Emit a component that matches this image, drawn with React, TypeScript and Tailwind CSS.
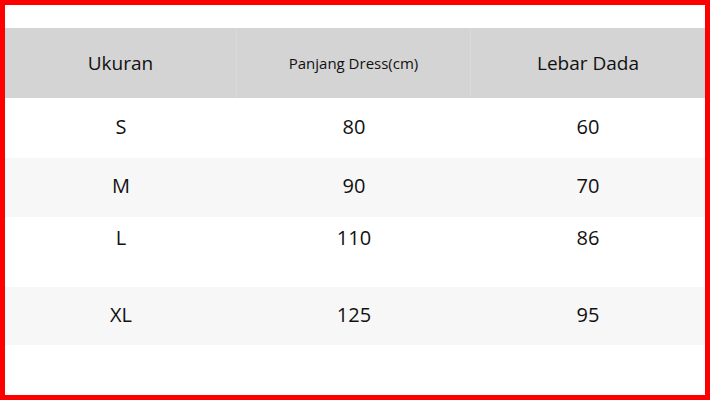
import React from 'react';

const rows = [
  { size: 'S', panjang: '80', lebar: '60', cls: 'h-[60px] pb-[2px] bg-white' },
  { size: 'M', panjang: '90', lebar: '70', cls: 'h-[59px] pb-[3px] bg-[#f7f7f7]' },
  { size: 'L', panjang: '110', lebar: '86', cls: 'h-[70px] pb-[28px] bg-white' },
  { size: 'XL', panjang: '125', lebar: '95', cls: 'h-[58px] pb-[2px] bg-[#f7f7f7]' },
];

const cols = 'grid grid-cols-[232px_234px_234px]';

const App: React.FC = () => {
  return (
    <div
      className="w-[710px] h-[400px] border-[5px] border-[#fe0000] bg-white text-[#111] pt-[23px]"
      style={{ fontFamily: '"Open Sans", "Noto Sans", sans-serif' }}
    >
      <div className={`${cols} h-[70px] bg-[#d4d4d4]`}>
        <div className="flex items-center justify-center text-[19px] border-r border-[#dadada]">Ukuran</div>
        <div className="flex items-center justify-center text-[15px] border-r border-[#dadada]">Panjang Dress(cm)</div>
        <div className="flex items-center justify-center text-[19px]">Lebar Dada</div>
      </div>
      {rows.map((r) => (
        <div key={r.size} className={`${cols} ${r.cls} text-[20px]`}>
          <div className="flex items-center justify-center">{r.size}</div>
          <div className="flex items-center justify-center">{r.panjang}</div>
          <div className="flex items-center justify-center">{r.lebar}</div>
        </div>
      ))}
    </div>
  );
};

export default App;
